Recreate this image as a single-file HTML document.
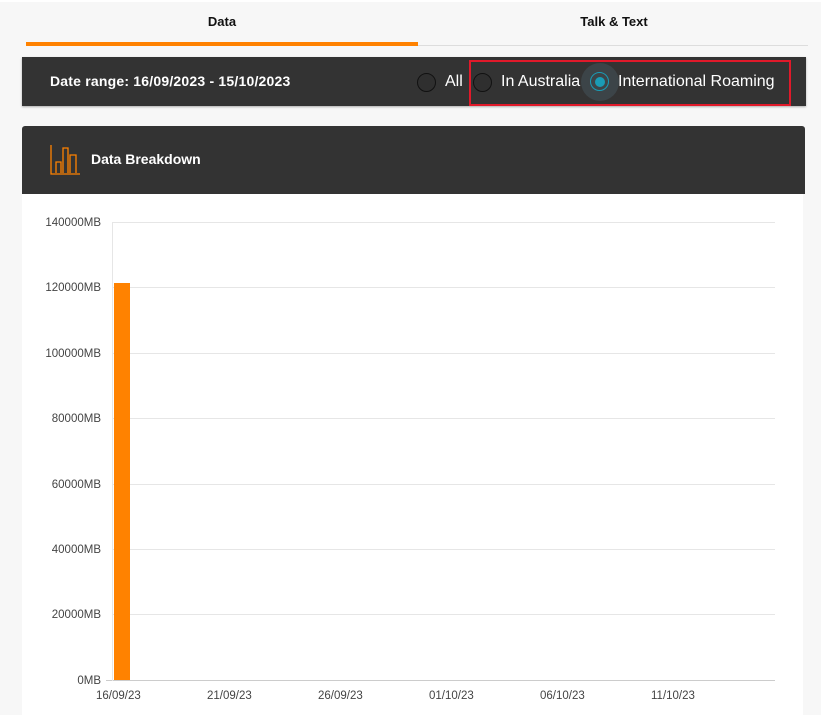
<!DOCTYPE html>
<html><head><style>
body{margin:0;width:821px;height:715px;background:#f7f7f7;font-family:"Liberation Sans",sans-serif;position:relative;overflow:hidden}
.a{position:absolute}
.t{font-weight:bold;font-size:13px;color:#111}
.lbl{font-size:11.5px;color:#444}
.g{height:1px;background:#e6e6e6;left:112px;width:663px}
.r{width:17px;height:17px;border:1.5px solid #111;border-radius:50%;background:#2f2f2f}
</style></head><body>
<div class="a" style="left:0;top:0;width:821px;height:2px;background:#fff"></div>
<div class="a t" style="left:26px;width:392px;text-align:center;top:14px">Data</div>
<div class="a t" style="left:418px;width:392px;text-align:center;top:14px">Talk &amp; Text</div>
<div class="a" style="left:418px;top:45px;width:390px;height:1px;background:#ddd"></div>
<div class="a" style="left:26px;top:42px;width:392px;height:4px;background:#ff8200"></div>
<div class="a" style="left:22px;top:57px;width:784px;height:49px;background:#333;box-shadow:0 1px 2px rgba(0,0,0,.3)"></div>
<div class="a" style="left:50px;top:73px;color:#fff;font-weight:bold;font-size:14px;letter-spacing:.2px">Date range: 16/09/2023 - 15/10/2023</div>
<div class="a r" style="left:417px;top:73px"></div>
<div class="a" style="left:445px;top:73px;color:#fff;font-size:16px">All</div>
<div class="a r" style="left:473px;top:73px"></div>
<div class="a" style="left:501px;top:73px;color:#fff;font-size:16px">In Australia</div>
<div class="a" style="left:581px;top:63px;width:38px;height:38px;border-radius:50%;background:#3c4448"></div>
<div class="a" style="left:590px;top:72px;width:17px;height:17px;border:1.5px solid #1a9bb5;border-radius:50%"></div>
<div class="a" style="left:595px;top:77px;width:10px;height:10px;border-radius:50%;background:#1a9bb5"></div>
<div class="a" style="left:618px;top:73px;color:#fff;font-size:16px">International Roaming</div>
<div class="a" style="left:469px;top:60px;width:318px;height:42px;border:2px solid #e0192a"></div>
<div class="a" style="left:22px;top:126px;width:783px;height:68px;background:#333;border-radius:3px 3px 0 0"></div>
<svg class="a" style="left:50px;top:145px" width="31" height="30"><path d="M1 0V29H30M6 28V17h5v11M13 28V3h5v25M20 28V10h6v18" fill="none" stroke="#ff8200" stroke-width="1.3"/></svg>
<div class="a" style="left:91px;top:151px;color:#fff;font-weight:bold;font-size:14px">Data Breakdown</div>
<div class="a" style="left:22px;top:194px;width:781px;height:521px;background:#fff"></div>
<div class="a g" style="top:222px"></div>
<div class="a g" style="top:287px"></div>
<div class="a g" style="top:353px"></div>
<div class="a g" style="top:418px"></div>
<div class="a g" style="top:484px"></div>
<div class="a g" style="top:549px"></div>
<div class="a g" style="top:614px"></div>
<div class="a" style="left:106px;top:680px;width:669px;height:1px;background:#ccc"></div>
<div class="a" style="left:112px;top:222px;width:1px;height:459px;background:#e6e6e6"></div>
<div class="a" style="left:114px;top:283px;width:16px;height:397px;background:#ff8200"></div>
<div class="a lbl" style="right:720px;top:217px">140000MB</div>
<div class="a lbl" style="right:720px;top:282px">120000MB</div>
<div class="a lbl" style="right:720px;top:348px">100000MB</div>
<div class="a lbl" style="right:720px;top:413px">80000MB</div>
<div class="a lbl" style="right:720px;top:479px">60000MB</div>
<div class="a lbl" style="right:720px;top:544px">40000MB</div>
<div class="a lbl" style="right:720px;top:609px">20000MB</div>
<div class="a lbl" style="right:720px;top:675px">0MB</div>
<div class="a lbl" style="left:96px;top:690px">16/09/23</div>
<div class="a lbl" style="left:207px;top:690px">21/09/23</div>
<div class="a lbl" style="left:318px;top:690px">26/09/23</div>
<div class="a lbl" style="left:429px;top:690px">01/10/23</div>
<div class="a lbl" style="left:540px;top:690px">06/10/23</div>
<div class="a lbl" style="left:651px;top:690px">11/10/23</div>
</body></html>
